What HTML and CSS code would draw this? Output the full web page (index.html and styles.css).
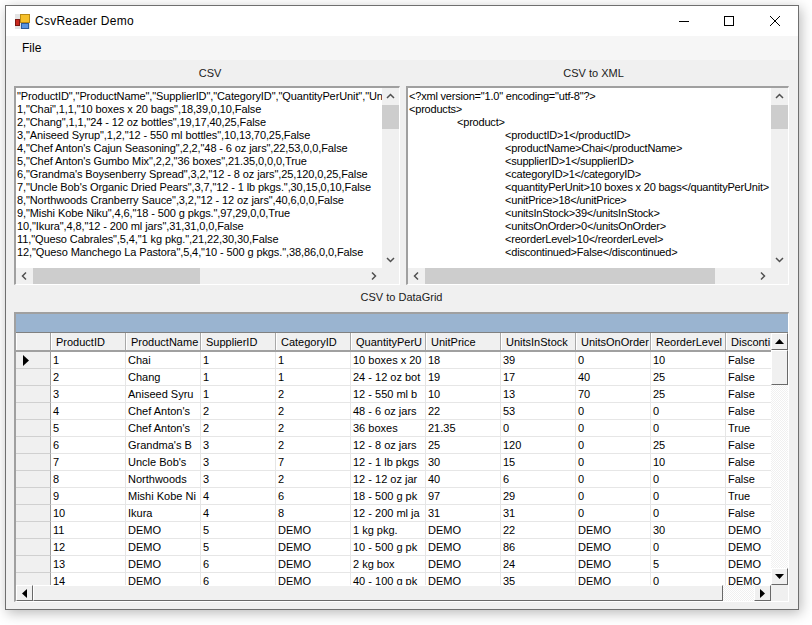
FILE: index.html
```html
<!DOCTYPE html>
<html lang="en">
<head>
<meta charset="utf-8">
<title>CsvReader Demo</title>
<link rel="stylesheet" href="styles.css">
</head>
<body>
<div class="window">
  <header class="titlebar">
    <svg class="appicon" width="15" height="15" viewBox="0 0 15 15">
      <rect x="0" y="0" width="15" height="15" fill="#e4e4e4"/>
      <rect x="5.500" y="0.500" width="9" height="8" fill="#f6c02a" stroke="#b98a14"/>
      <rect x="0.500" y="5.500" width="4" height="6" fill="#c8281e" stroke="#7c1810"/>
      <rect x="6.500" y="9.500" width="7" height="5" fill="#5a94e0" stroke="#2c5c9c"/>
    </svg>
    <span class="title">CsvReader Demo</span>
    <div class="caption-buttons">
      <svg width="46" height="30" viewBox="0 0 46 30"><path d="M19 15.500h10" stroke="#000"/></svg>
      <svg width="46" height="30" viewBox="0 0 46 30"><rect x="18.500" y="10.500" width="9" height="9" fill="none" stroke="#000"/></svg>
      <svg width="46" height="30" viewBox="0 0 46 30"><path d="M18 10l10 10M28 10l-10 10" stroke="#000" fill="none"/></svg>
    </div>
  </header>
  <nav class="menubar"><span class="menuitem">File</span></nav>
  <main class="content">
    <section class="top-panels">
      <div class="panel">
        <div class="label label-csv">CSV</div>
        <div class="textbox">
          <pre class="text text-csv">"ProductID","ProductName","SupplierID","CategoryID","QuantityPerUnit","UnitPrice","UnitsInStock"
1,"Chai",1,1,"10 boxes x 20 bags",18,39,0,10,False
2,"Chang",1,1,"24 - 12 oz bottles",19,17,40,25,False
3,"Aniseed Syrup",1,2,"12 - 550 ml bottles",10,13,70,25,False
4,"Chef Anton's Cajun Seasoning",2,2,"48 - 6 oz jars",22,53,0,0,False
5,"Chef Anton's Gumbo Mix",2,2,"36 boxes",21.35,0,0,0,True
6,"Grandma's Boysenberry Spread",3,2,"12 - 8 oz jars",25,120,0,25,False
7,"Uncle Bob's Organic Dried Pears",3,7,"12 - 1 lb pkgs.",30,15,0,10,False
8,"Northwoods Cranberry Sauce",3,2,"12 - 12 oz jars",40,6,0,0,False
9,"Mishi Kobe Niku",4,6,"18 - 500 g pkgs.",97,29,0,0,True
10,"Ikura",4,8,"12 - 200 ml jars",31,31,0,0,False
11,"Queso Cabrales",5,4,"1 kg pkg.",21,22,30,30,False
12,"Queso Manchego La Pastora",5,4,"10 - 500 g pkgs.",38,86,0,0,False</pre>
          <div class="vscroll">
            <svg class="arrow" width="17" height="17" viewBox="0 0 17 17"><path d="M5 10l3.500-3.500L12 10" fill="none" stroke="#505050" stroke-width="1.500"/></svg>
            <div class="track"><div class="thumb-v"></div></div>
            <svg class="arrow" width="17" height="17" viewBox="0 0 17 17"><path d="M5 7l3.500 3.500L12 7" fill="none" stroke="#505050" stroke-width="1.500"/></svg>
          </div>
          <div class="hscroll">
            <svg class="arrow" width="17" height="16" viewBox="0 0 17 16"><path d="M10 4.500L6.500 8l3.500 3.500" fill="none" stroke="#505050" stroke-width="1.500"/></svg>
            <div class="track-h"><div class="thumb-h thumb-left"></div></div>
            <svg class="arrow" width="17" height="16" viewBox="0 0 17 16"><path d="M7 4.500L10.500 8 7 11.500" fill="none" stroke="#505050" stroke-width="1.500"/></svg>
          </div>
          <div class="corner"></div>
        </div>
      </div>
      <div class="panel">
        <div class="label label-xml">CSV to XML</div>
        <div class="textbox">
          <pre class="text text-xml">&lt;?xml version="1.0" encoding="utf-8"?&gt;
&lt;products&gt;
<span class="tab1">&lt;product&gt;</span>
<span class="tab2">&lt;productID&gt;1&lt;/productID&gt;</span>
<span class="tab2">&lt;productName&gt;Chai&lt;/productName&gt;</span>
<span class="tab2">&lt;supplierID&gt;1&lt;/supplierID&gt;</span>
<span class="tab2">&lt;categoryID&gt;1&lt;/categoryID&gt;</span>
<span class="tab2">&lt;quantityPerUnit&gt;10 boxes x 20 bags&lt;/quantityPerUnit&gt;</span>
<span class="tab2">&lt;unitPrice&gt;18&lt;/unitPrice&gt;</span>
<span class="tab2">&lt;unitsInStock&gt;39&lt;/unitsInStock&gt;</span>
<span class="tab2">&lt;unitsOnOrder&gt;0&lt;/unitsOnOrder&gt;</span>
<span class="tab2">&lt;reorderLevel&gt;10&lt;/reorderLevel&gt;</span>
<span class="tab2">&lt;discontinued&gt;False&lt;/discontinued&gt;</span></pre>
          <div class="vscroll">
            <svg class="arrow" width="17" height="17" viewBox="0 0 17 17"><path d="M5 10l3.500-3.500L12 10" fill="none" stroke="#505050" stroke-width="1.500"/></svg>
            <div class="track"><div class="thumb-v"></div></div>
            <svg class="arrow" width="17" height="17" viewBox="0 0 17 17"><path d="M5 7l3.500 3.500L12 7" fill="none" stroke="#505050" stroke-width="1.500"/></svg>
          </div>
          <div class="hscroll">
            <svg class="arrow" width="17" height="16" viewBox="0 0 17 16"><path d="M10 4.500L6.500 8l3.500 3.500" fill="none" stroke="#505050" stroke-width="1.500"/></svg>
            <div class="track-h"><div class="thumb-h thumb-right"></div></div>
            <svg class="arrow" width="17" height="16" viewBox="0 0 17 16"><path d="M7 4.500L10.500 8 7 11.500" fill="none" stroke="#505050" stroke-width="1.500"/></svg>
          </div>
          <div class="corner"></div>
        </div>
      </div>
    </section>
    <div class="label label-grid">CSV to DataGrid</div>
    <section class="datagrid">
      <div class="grid-caption"></div>
      <div class="grid-middle">
        <div class="table">
          <div class="row head">
            <div class="rowhead"></div><div class="hc">ProductID</div><div class="hc">ProductName</div><div class="hc">SupplierID</div><div class="hc">CategoryID</div><div class="hc">QuantityPerU</div><div class="hc">UnitPrice</div><div class="hc">UnitsInStock</div><div class="hc">UnitsOnOrder</div><div class="hc">ReorderLevel</div><div class="hc">Disconti</div>
          </div>
          <div class="row"><div class="rowhead"><svg width="8" height="11" viewBox="0 0 8 11"><path d="M1 0l6 5.500L1 11z" fill="#000"/></svg></div><div class="c">1</div><div class="c">Chai</div><div class="c">1</div><div class="c">1</div><div class="c">10 boxes x 20</div><div class="c">18</div><div class="c">39</div><div class="c">0</div><div class="c">10</div><div class="c">False</div></div>
          <div class="row"><div class="rowhead"></div><div class="c">2</div><div class="c">Chang</div><div class="c">1</div><div class="c">1</div><div class="c">24 - 12 oz bot</div><div class="c">19</div><div class="c">17</div><div class="c">40</div><div class="c">25</div><div class="c">False</div></div>
          <div class="row"><div class="rowhead"></div><div class="c">3</div><div class="c">Aniseed Syru</div><div class="c">1</div><div class="c">2</div><div class="c">12 - 550 ml b</div><div class="c">10</div><div class="c">13</div><div class="c">70</div><div class="c">25</div><div class="c">False</div></div>
          <div class="row"><div class="rowhead"></div><div class="c">4</div><div class="c">Chef Anton's</div><div class="c">2</div><div class="c">2</div><div class="c">48 - 6 oz jars</div><div class="c">22</div><div class="c">53</div><div class="c">0</div><div class="c">0</div><div class="c">False</div></div>
          <div class="row"><div class="rowhead"></div><div class="c">5</div><div class="c">Chef Anton's</div><div class="c">2</div><div class="c">2</div><div class="c">36 boxes</div><div class="c">21.35</div><div class="c">0</div><div class="c">0</div><div class="c">0</div><div class="c">True</div></div>
          <div class="row"><div class="rowhead"></div><div class="c">6</div><div class="c">Grandma's B</div><div class="c">3</div><div class="c">2</div><div class="c">12 - 8 oz jars</div><div class="c">25</div><div class="c">120</div><div class="c">0</div><div class="c">25</div><div class="c">False</div></div>
          <div class="row"><div class="rowhead"></div><div class="c">7</div><div class="c">Uncle Bob's</div><div class="c">3</div><div class="c">7</div><div class="c">12 - 1 lb pkgs</div><div class="c">30</div><div class="c">15</div><div class="c">0</div><div class="c">10</div><div class="c">False</div></div>
          <div class="row"><div class="rowhead"></div><div class="c">8</div><div class="c">Northwoods</div><div class="c">3</div><div class="c">2</div><div class="c">12 - 12 oz jar</div><div class="c">40</div><div class="c">6</div><div class="c">0</div><div class="c">0</div><div class="c">False</div></div>
          <div class="row"><div class="rowhead"></div><div class="c">9</div><div class="c">Mishi Kobe Ni</div><div class="c">4</div><div class="c">6</div><div class="c">18 - 500 g pk</div><div class="c">97</div><div class="c">29</div><div class="c">0</div><div class="c">0</div><div class="c">True</div></div>
          <div class="row"><div class="rowhead"></div><div class="c">10</div><div class="c">Ikura</div><div class="c">4</div><div class="c">8</div><div class="c">12 - 200 ml ja</div><div class="c">31</div><div class="c">31</div><div class="c">0</div><div class="c">0</div><div class="c">False</div></div>
          <div class="row"><div class="rowhead"></div><div class="c">11</div><div class="c">DEMO</div><div class="c">5</div><div class="c">DEMO</div><div class="c">1 kg pkg.</div><div class="c">DEMO</div><div class="c">22</div><div class="c">DEMO</div><div class="c">30</div><div class="c">DEMO</div></div>
          <div class="row"><div class="rowhead"></div><div class="c">12</div><div class="c">DEMO</div><div class="c">5</div><div class="c">DEMO</div><div class="c">10 - 500 g pk</div><div class="c">DEMO</div><div class="c">86</div><div class="c">DEMO</div><div class="c">0</div><div class="c">DEMO</div></div>
          <div class="row"><div class="rowhead"></div><div class="c">13</div><div class="c">DEMO</div><div class="c">6</div><div class="c">DEMO</div><div class="c">2 kg box</div><div class="c">DEMO</div><div class="c">24</div><div class="c">DEMO</div><div class="c">5</div><div class="c">DEMO</div></div>
          <div class="row"><div class="rowhead"></div><div class="c">14</div><div class="c">DEMO</div><div class="c">6</div><div class="c">DEMO</div><div class="c">40 - 100 g pk</div><div class="c">DEMO</div><div class="c">35</div><div class="c">DEMO</div><div class="c">0</div><div class="c">DEMO</div></div>
        </div>
        <div class="grid-vscroll">
          <div class="btn3d btn-v"><svg width="9" height="5" viewBox="0 0 9 5"><path d="M4.500 0L9 5H0z" fill="#000"/></svg></div>
          <div class="btn3d thumb3d-v"></div>
          <div class="checker"></div>
          <div class="btn3d btn-v"><svg width="9" height="5" viewBox="0 0 9 5"><path d="M0 0h9L4.500 5z" fill="#000"/></svg></div>
        </div>
      </div>
      <div class="grid-hscroll">
        <div class="btn3d btn-h"><svg width="5" height="9" viewBox="0 0 5 9"><path d="M5 0v9L0 4.500z" fill="#000"/></svg></div>
        <div class="btn3d thumb3d-h"></div>
        <div class="checker"></div>
        <div class="btn3d btn-h"><svg width="5" height="9" viewBox="0 0 5 9"><path d="M0 0l5 4.500L0 9z" fill="#000"/></svg></div>
        <div class="grid-corner"></div>
      </div>
    </section>
  </main>
</div>
</body>
</html>
```
FILE: styles.css
```css
* { box-sizing: border-box; }
html, body { margin: 0; height: 100%; background: #fff; overflow: hidden; }
body { padding: 5px 0 0 5px; font-family: "Liberation Sans", Arial, sans-serif; font-size: 12px; color: #000; }

.window {
  width: 794px; height: 605px;
  border: 1px solid #6f6f6f;
  background: #f0f0f0;
  box-shadow: 2px 3px 12px rgba(0,0,0,.28);
  display: flex; flex-direction: column;
}

.titlebar { height: 30px; background: #fff; display: flex; align-items: center; padding-left: 9px; flex: none; }
.appicon { flex: none; }
.title { margin-left: 5px; font-size: 12px; letter-spacing: .25px; }
.caption-buttons { margin-left: auto; display: flex; }
.caption-buttons svg { display: block; }

.menubar { height: 24px; background: #f6f6f6; display: flex; align-items: center; padding-left: 16px; flex: none; }
.menuitem { font-size: 12px; }

.content { flex: 1; padding: 0 9px 0 8px; display: flex; flex-direction: column; min-height: 0; }
.top-panels { display: grid; grid-template-columns: 386px 383px; column-gap: 6px; flex: none; }
.panel { display: flex; flex-direction: column; min-width: 0; }
.label { height: 26px; line-height: 27px; text-align: center; color: #202020; font-size: 11px; flex: none; }
.label-csv { padding-left: 6px; }
.label-xml { padding-right: 8px; }
.label-grid { height: 27px; line-height: 24px; }

.textbox {
  height: 199px;
  border-top: 2px solid #a0a0a0; border-left: 2px solid #a0a0a0;
  border-right: 1px solid #fff; border-bottom: 1px solid #fff;
  display: grid; grid-template-columns: 1fr 17px; grid-template-rows: 1fr 16px;
  background: #f0f0f0; overflow: hidden;
}
.text {
  margin: 0; padding: 2px 0 0 1px; background: #fff; overflow: hidden; white-space: pre;
  font-family: "Liberation Sans", Arial, sans-serif; font-size: 11px; line-height: 13px; color: #000; min-width: 0;
}
.text-csv { letter-spacing: -.1px; }
.text-xml { letter-spacing: -.2px; }
.tab1 { padding-left: 48px; }
.tab2 { padding-left: 96px; }

.vscroll { display: flex; flex-direction: column; background: #f0f0f0; }
.track { flex: 1; }
.thumb-v { height: 24px; background: #cdcdcd; }
.arrow { display: block; flex: none; }
.hscroll { display: flex; background: #f0f0f0; }
.track-h { flex: 1; min-width: 0; }
.thumb-h { height: 100%; background: #cdcdcd; }
.thumb-left { width: 167px; }
.thumb-right { width: 290px; }
.corner { background: #f0f0f0; }

.datagrid {
  height: 290px; flex: none;
  border-top: 2px solid #a0a0a0; border-left: 2px solid #a0a0a0;
  border-right: 1px solid #fff; border-bottom: 1px solid #fff;
  display: flex; flex-direction: column; background: #f0f0f0;
}
.grid-caption { height: 19px; background: #9ab4d0; border-bottom: 1px solid #808080; flex: none; }
.grid-middle { flex: 1; display: flex; min-height: 0; }
.table { flex: 1; overflow: hidden; background: #fff; min-width: 0; }
.row { display: grid; grid-template-columns: 35px repeat(10, 75px); height: 17px; }
.row.head { height: 19px; background: #f0f0f0; border-bottom: 2px solid #a0a0a0; }
.rowhead { background: #f0f0f0; border-right: 1px solid #a0a0a0; border-bottom: 1px solid #d0d0d0; display: flex; align-items: center; padding-left: 6px; }
.row.head .rowhead { border-bottom: 0; border-left: 1px solid #fff; }
.hc { padding-left: 4px; border-right: 1px solid #a8a8a8; border-left: 1px solid #fff; line-height: 18px; overflow: hidden; white-space: nowrap; font-size: 11px; }
.c { padding-left: 2px; border-right: 1px solid #e6e6e6; border-bottom: 1px solid #e6e6e6; line-height: 16px; overflow: hidden; white-space: nowrap; font-size: 11px; }

.btn3d {
  background: #f0f0f0;
  border-top: 1px solid #fff; border-left: 1px solid #fff;
  border-right: 1px solid #696969; border-bottom: 1px solid #696969;
  display: flex; align-items: center; justify-content: center; flex: none;
}
.grid-vscroll { width: 17px; flex: none; display: flex; flex-direction: column; }
.btn-v { height: 17px; }
.thumb3d-v { height: 35px; }
.checker { flex: 1; background: repeating-conic-gradient(#fff 0 25%, #f0f0f0 0 50%) 0 0 / 2px 2px; }
.grid-hscroll { height: 16px; flex: none; display: flex; }
.btn-h { width: 17px; }
.thumb3d-h { width: 690px; }
.grid-corner { width: 17px; background: #f0f0f0; flex: none; }
```
